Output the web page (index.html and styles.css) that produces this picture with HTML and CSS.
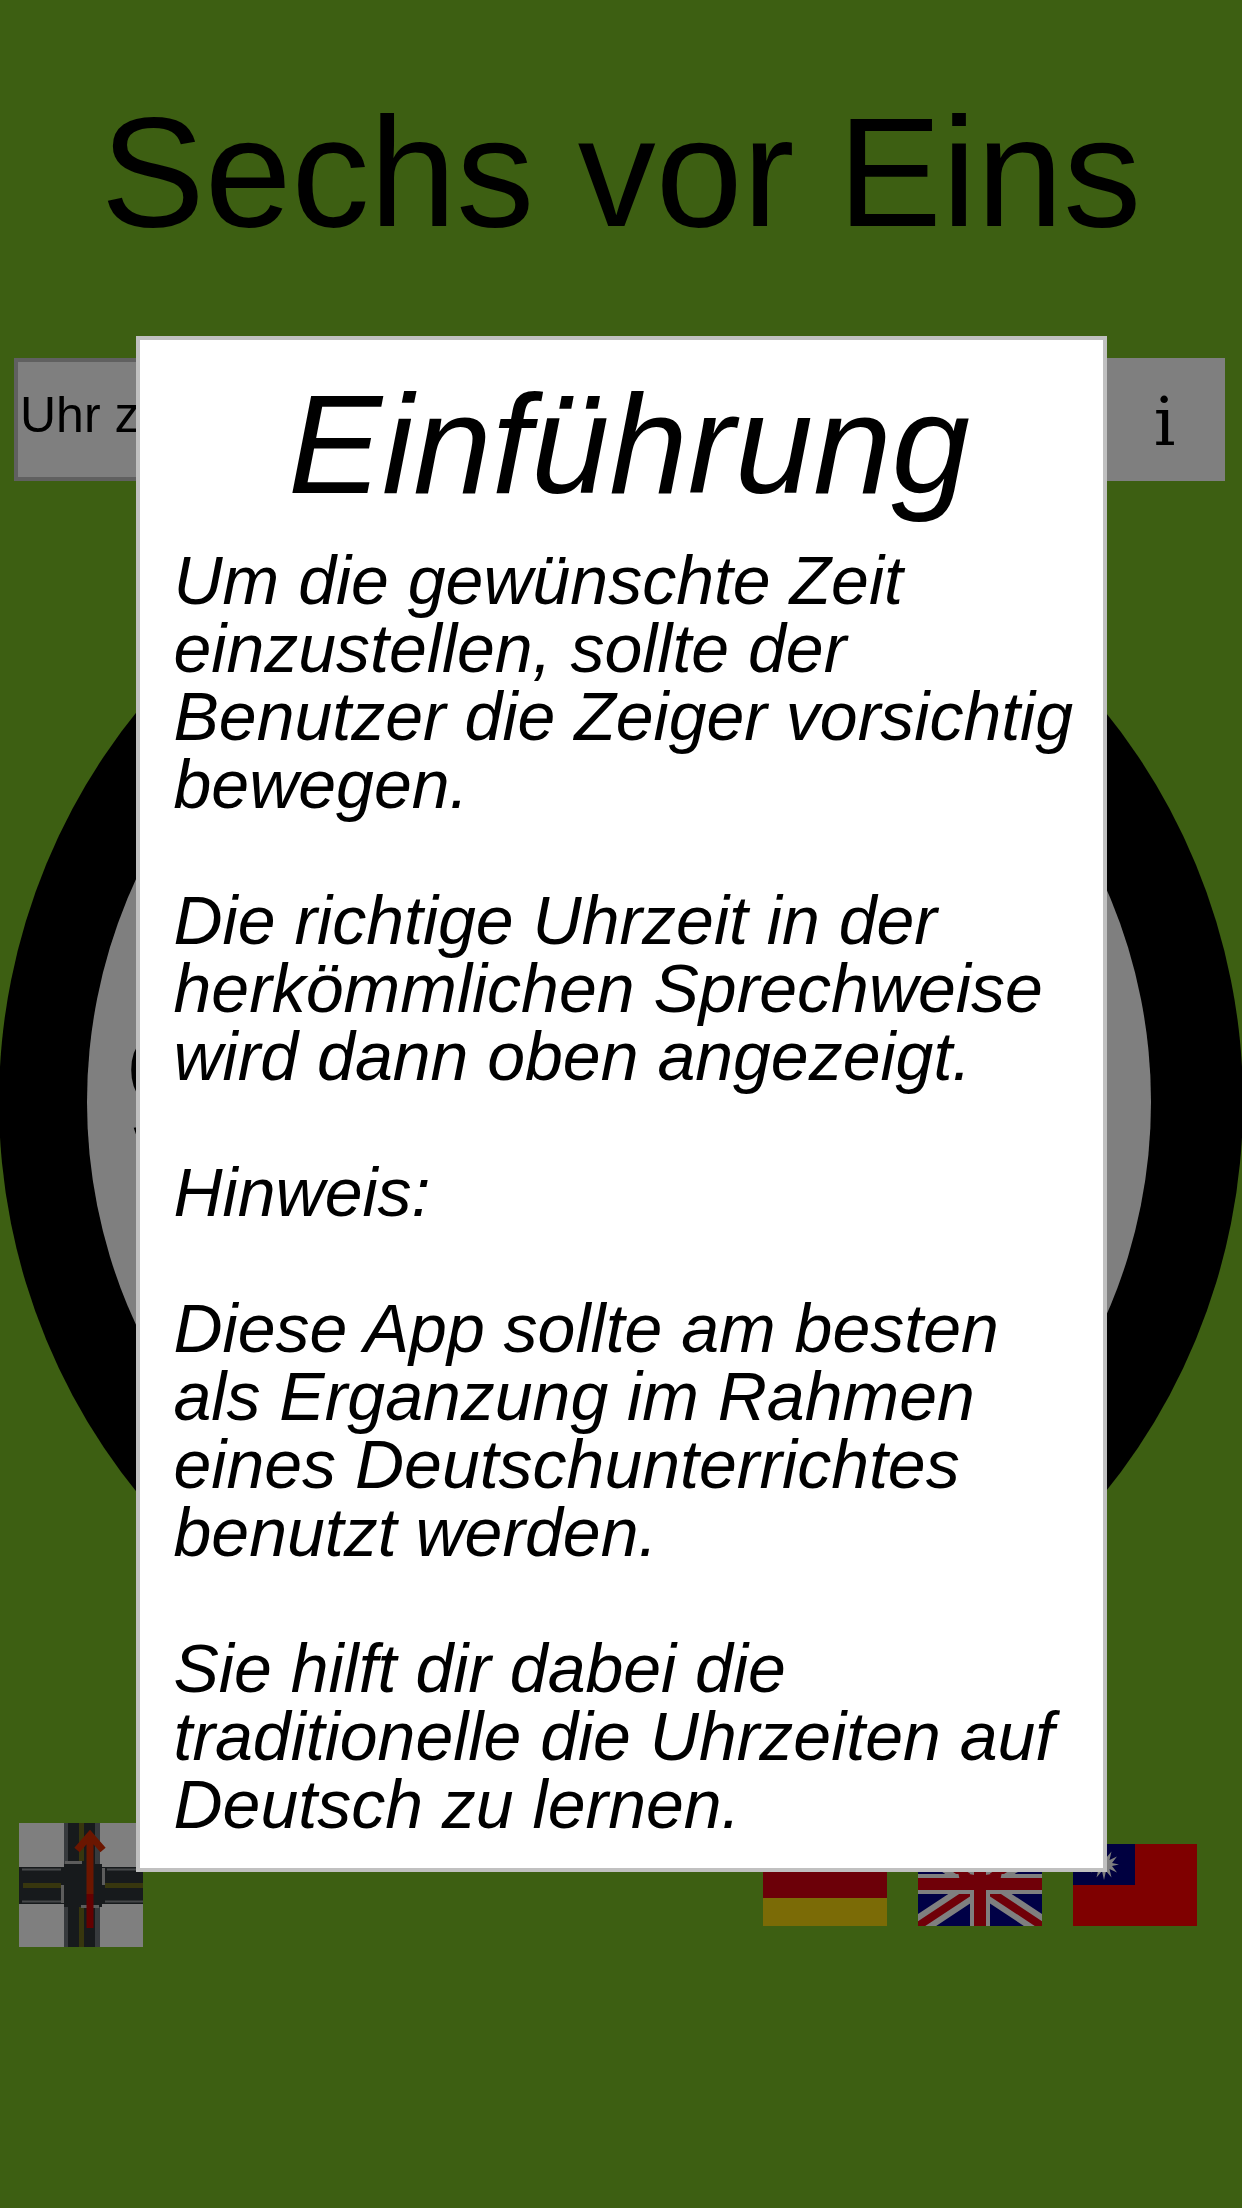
FILE: index.html
```html
<!DOCTYPE html>
<html lang="de">
<head>
<meta charset="utf-8">
<meta name="viewport" content="width=device-width, initial-scale=1">
<title>Sechs vor Eins</title>
<link rel="stylesheet" href="styles.css">
</head>
<body>
<div class="app">
  <h1 class="time-phrase">Sechs vor Eins</h1>
  <div class="toolbar">
    <input class="mode-field" type="text" value="Uhr z" aria-label="Uhr" readonly>
    <button class="info-button" type="button">i</button>
  </div>
  <div class="clock">
    <svg viewBox="0 0 1242 1242" aria-hidden="true">
      <circle cx="621" cy="621" r="622" fill="#000"/>
      <circle cx="619" cy="621" r="532" fill="#fff"/>
      <text class="numeral" x="123" y="670">9</text>
    </svg>
  </div>
  <div class="bottom-bar">
    <button class="icon-button" type="button" aria-label="Kreuzung">
      <svg width="124" height="124" viewBox="0 0 124 124">
        <rect width="124" height="124" fill="#fff"/>
        <rect x="45" width="36" height="124" fill="#6e747a"/>
        <rect y="44" width="124" height="37" fill="#2e3438"/>
        <rect x="49" width="27" height="124" fill="#2e3438"/>
        <rect x="45" y="41" width="38" height="43" fill="#2e3438"/>
        <path d="M60 0H65V38H60zM60 84H65V124H60zM4 60H42V65H4zM86 60H124V65H86z" fill="#6f6c1c"/>
        <path d="M3 46.500H42M88 46.500H124M3 78.500H42M86 78.500H124" stroke="#8c9094" stroke-width="2"/>
        <path d="M46 39.500H63M62 83.500H80M43.500 62V80M84.500 45V62" stroke="#b8b8b8" stroke-width="3"/>
        <path d="M71 105V71" stroke="#c80000" stroke-width="7"/>
        <path d="M71 71V12M58 27L71 12L84 27" fill="none" stroke="#d62c00" stroke-width="7"/>
      </svg>
    </button>
    <div class="languages">
      <button class="icon-button" type="button" aria-label="Deutsch">
        <svg width="124" height="82" viewBox="0 0 124 82">
          <rect width="124" height="27" fill="#000"/>
          <rect y="27" width="124" height="28" fill="#d80010"/>
          <rect y="54" width="124" height="28" fill="#f6d60c"/>
        </svg>
      </button>
      <button class="icon-button" type="button" aria-label="English">
        <svg width="124" height="82" viewBox="0 0 124 82">
          <rect width="124" height="82" fill="#00008c"/>
          <path d="M0 0L124 82M124 0L0 82" stroke="#fff" stroke-width="20"/>
          <path d="M0 0L124 82M124 0L0 82" stroke="#e00010" stroke-width="8"/>
          <path d="M62 0V82M0 40H124" stroke="#fff" stroke-width="20"/>
          <path d="M62 0V82M0 40H124" stroke="#e00010" stroke-width="12"/>
          <path d="M40 28L62 32L84 28L80 46H44Z" fill="#e00010"/>
        </svg>
      </button>
      <button class="icon-button" type="button" aria-label="繁體中文">
        <svg width="124" height="82" viewBox="0 0 124 82">
          <rect width="124" height="82" fill="#fe0000"/>
          <rect width="62" height="41" fill="#000080"/>
          <path d="M31 5L33 14L38.500 7.500L36.500 16L44 12.500L39 19L46 20.500L39 22L44 28.500L36.500 25L38.500 33.500L33 27L31 36L29 27L23.500 33.500L25.500 25L18 28.500L23 22L16 20.500L23 19L18 12.500L25.500 16L23.500 7.500L29 14Z" fill="#fff"/>
        </svg>
      </button>
    </div>
  </div>
</div>
<div class="overlay">
  <section class="dialog" role="dialog" aria-modal="true" aria-labelledby="intro-title">
    <h2 class="dialog-title" id="intro-title">Einführung</h2>
    <p>Um die gewünschte Zeit einzustellen, sollte der Benutzer die Zeiger vorsichtig bewegen.</p>
    <p>Die richtige Uhrzeit in der herkömmlichen Sprechweise wird dann oben angezeigt.</p>
    <p>Hinweis:</p>
    <p>Diese App sollte am besten als Erganzung im Rahmen eines Deutschunterrichtes benutzt werden.</p>
    <p>Sie hilft dir dabei die traditionelle die Uhrzeiten auf Deutsch zu lernen.</p>
  </section>
</div>
</body>
</html>
```
FILE: styles.css
```css
* { box-sizing: border-box; }

body {
  margin: 0;
  min-height: 100vh;
  background: #7abe24;
  color: #000;
  font-family: "Liberation Sans", Arial, sans-serif;
}

.app {
  display: flex;
  flex-direction: column;
  min-height: 100vh;
  overflow: hidden;
}

.time-phrase {
  margin: 0;
  padding-top: 84px;
  height: 358px;
  font-size: 156px;
  font-weight: 400;
  line-height: 176px;
  text-align: center;
}

.toolbar {
  display: flex;
  gap: 8px;
  height: 123px;
  padding: 0 17px 0 14px;
}

.mode-field {
  flex: 1;
  min-width: 0;
  padding: 0 2px 10px;
  border: 4px solid #c0c0c0;
  border-radius: 0;
  background: #fff;
  color: #000;
  font: 50px "Liberation Sans", Arial, sans-serif;
}

.info-button {
  width: 123px;
  padding: 4px 0 0 2px;
  border: 0;
  background: #fff;
  color: #000;
  font: 68px "DejaVu Serif", serif;
}

.clock svg {
  display: block;
  width: 100%;
}

.numeral {
  font-size: 175px;
}

.bottom-bar {
  display: flex;
  justify-content: space-between;
  align-items: center;
  margin-top: 100px;
  padding: 0 45px 0 19px;
}

.languages {
  display: flex;
  gap: 31px;
}

.icon-button {
  padding: 0;
  border: 0;
  background: none;
}

.icon-button svg { display: block; }

.overlay {
  position: fixed;
  inset: 0;
  display: flex;
  align-items: center;
  justify-content: center;
  background: rgba(0, 0, 0, 0.5);
}

.dialog {
  width: calc(100% - 271px);
  padding: 24px 22px 30px 34px;
  border: 4px solid #c0c0c0;
  background: #fff;
  font-size: 68px;
  font-style: italic;
  line-height: 68px;
}

.dialog-title {
  margin: 0 0 22px;
  font-size: 141px;
  font-weight: 400;
  line-height: 160px;
  padding-left: 4px;
  text-align: center;
}

.dialog p { margin: 0; }

.dialog p + p { margin-top: 68px; }
```
